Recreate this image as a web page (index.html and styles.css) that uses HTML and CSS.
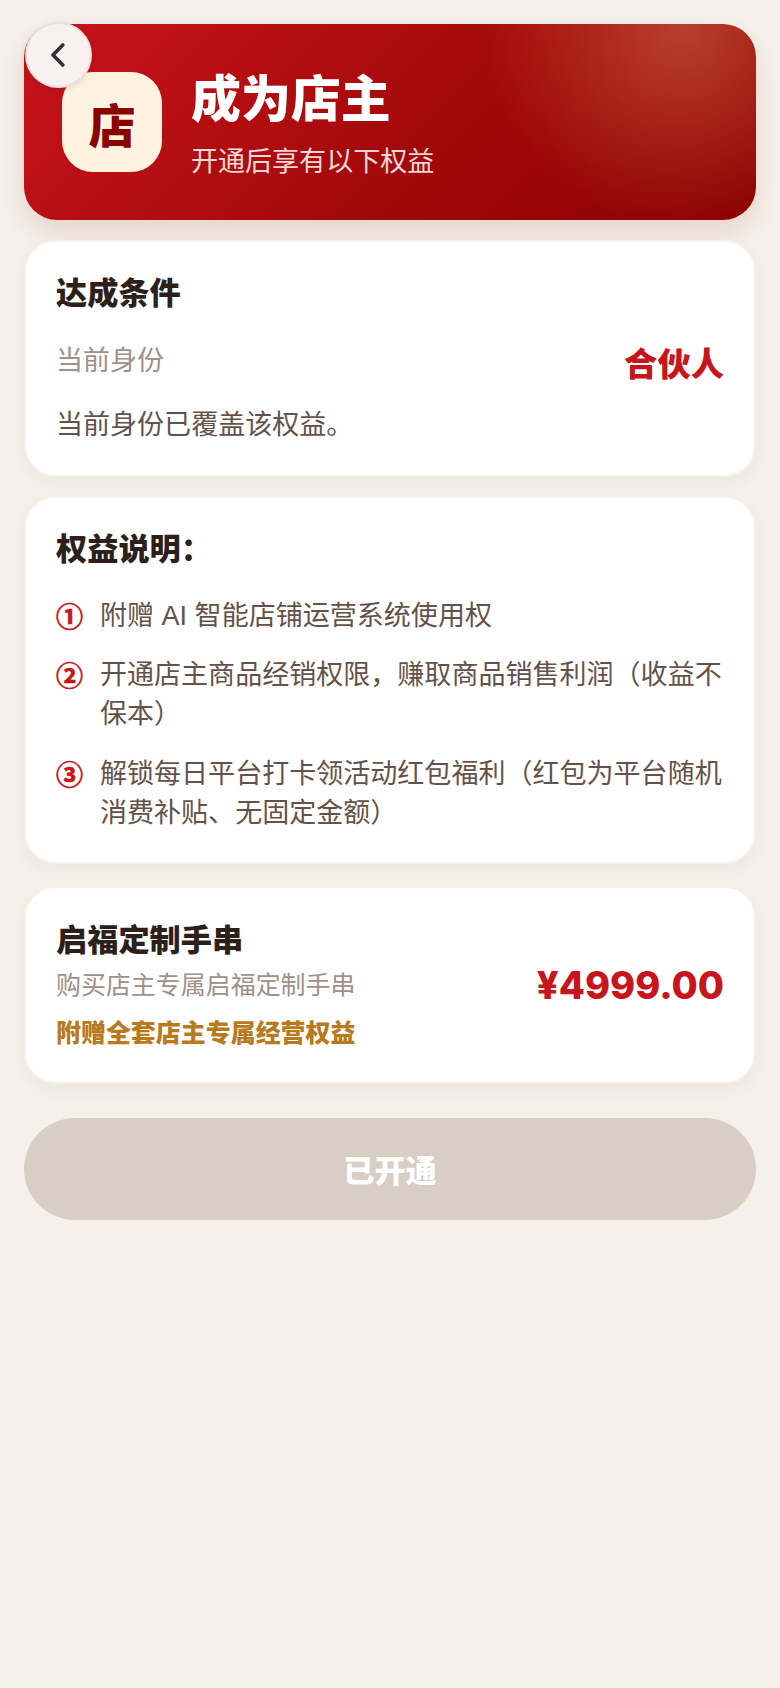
FILE: index.html
```html
<!DOCTYPE html>
<html lang="zh-CN">
<head>
<meta charset="utf-8">
<title>成为店主</title>
<link rel="stylesheet" href="styles.css">
</head>
<body>
<main class="page">
  <button class="back" aria-label="返回">
    <svg viewBox="0 0 14 24" width="14" height="24"><path d="M11.8 2 L2 12 L11.8 22" fill="none" stroke="#2f3133" stroke-width="3.6" stroke-linecap="round" stroke-linejoin="round"/></svg>
  </button>
  <header class="hero">
    <div class="hero-icon">店</div>
    <div class="hero-text">
      <h1>成为店主</h1>
      <p>开通后享有以下权益</p>
    </div>
  </header>
  <section class="card cond">
    <h2>达成条件</h2>
    <div class="cond-row">
      <span class="muted">当前身份</span>
      <strong class="role">合伙人</strong>
    </div>
    <p class="note">当前身份已覆盖该权益。</p>
  </section>
  <section class="card rights">
    <h2>权益说明：</h2>
    <ol class="list">
      <li><span class="num">①</span><span>附赠 AI 智能店铺运营系统使用权</span></li>
      <li><span class="num">②</span><span>开通店主商品经销权限，赚取商品销售利润（收益不保本）</span></li>
      <li><span class="num">③</span><span>解锁每日平台打卡领活动红包福利（红包为平台随机消费补贴、无固定金额）</span></li>
    </ol>
  </section>
  <section class="card product">
    <div class="prod-info">
      <h2>启福定制手串</h2>
      <p class="muted sub">购买店主专属启福定制手串</p>
      <p class="gift">附赠全套店主专属经营权益</p>
    </div>
    <div class="price">¥4999.00</div>
  </section>
  <button class="cta">已开通</button>
</main>
</body>
</html>
```
FILE: styles.css
```css
* { box-sizing: border-box; margin: 0; padding: 0; }
html, body { background: #f5f0ea; }
body {
  font-family: "Liberation Sans", "Noto Sans CJK SC", sans-serif;
  color: #2d1f1a;
  min-height: 1688px;
}
.page {
  position: relative;
  padding: 24px;
  display: flex;
  flex-direction: column;
}
.back {
  position: absolute;
  top: 22px;
  left: 24.5px;
  width: 67px;
  height: 66px;
  border-radius: 50%;
  border: 2px solid #e6e0df;
  background: #f9f1f1;
  box-shadow: 0 2px 6px rgba(60, 30, 20, .1);
  display: flex;
  align-items: center;
  justify-content: center;
  z-index: 2;
}
.hero {
  height: 196px;
  border-radius: 33px;
  padding: 0 38px;
  display: flex;
  align-items: center;
  gap: 29px;
  background:
    radial-gradient(circle at 90% 4%, rgba(255, 195, 135, .3), rgba(255, 195, 135, 0) 29%),
    linear-gradient(135deg, #c8141c 0%, #a00808 60%, #8b0000 100%);
  box-shadow: 0 12px 26px rgba(139, 0, 0, .12);
}
.hero-icon {
  width: 100px;
  height: 100px;
  flex: none;
  border-radius: 31px;
  background: #fff2df;
  color: #8b0000;
  font-size: 47px;
  font-weight: 900;
  display: flex;
  align-items: center;
  justify-content: center;
}
.hero-text { padding-top: 2px; }
.hero-text h1 {
  font-size: 49.92px;
  line-height: 66px;
  font-weight: 900;
  color: #fff;
}
.hero-text p {
  margin-top: 11px;
  font-size: 27.04px;
  line-height: 36px;
  color: rgba(255, 255, 255, .85);
}
.card {
  background: #fff;
  border: 2px solid #f7f0e6;
  border-radius: 31px;
  padding: 30px;
  box-shadow: 0 6px 16px rgba(80, 50, 30, .05);
}
.card h2 {
  font-size: 31.2px;
  line-height: 42px;
  font-weight: 900;
}
.cond { margin-top: 20px; padding-top: 31px; }
.cond-row {
  margin-top: 27px;
  display: flex;
  justify-content: space-between;
  align-items: flex-start;
}
.muted { color: #a09088; font-size: 27.04px; line-height: 36px; }
.cond-row .muted { margin-top: 1px; }
.role { color: #c8141c; font-size: 33.3px; line-height: 46px; font-weight: 900; }
.note { margin-top: 17px; font-size: 27.04px; line-height: 40px; color: #64524a; }
.rights { margin-top: 19px; padding-top: 31px; padding-bottom: 29px; }
.list { list-style: none; margin-top: 25.5px; display: flex; flex-direction: column; gap: 20.5px; }
.list li {
  display: flex;
  gap: 17px;
  font-size: 27.04px;
  line-height: 39px;
  color: #64524a;
}
.num {
  flex: none;
  width: 27px;
  position: relative;
  top: 2px;
  color: #c8141c;
  font-weight: 700;
  -webkit-text-stroke: .7px #c8141c;
}
.product {
  margin-top: 22px;
  padding-block: 31px;
  display: flex;
  justify-content: space-between;
  align-items: center;
}
.product h2 { line-height: 44px; }
.sub { display: block; margin-top: 4.5px; font-size: 24.96px; line-height: 36px; }
.gift { margin-top: 11.5px; font-size: 24.96px; line-height: 36px; font-weight: 900; color: #b87a1e; }
.price { color: #c8141c; font-family: Inter, "Liberation Sans", sans-serif; font-size: 38px; font-weight: 800; white-space: nowrap; }
.cta {
  margin-top: 34px;
  height: 102px;
  border: 0;
  border-radius: 51px;
  background: #d9cec4;
  color: #fff;
  font-family: inherit;
  font-size: 31.2px;
  font-weight: 900;
}
```
